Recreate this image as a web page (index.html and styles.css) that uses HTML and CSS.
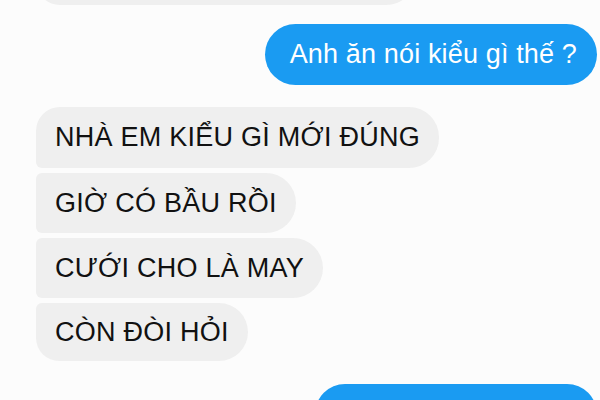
FILE: index.html
```html
<!DOCTYPE html>
<html lang="vi">
<head>
<meta charset="utf-8">
<link rel="stylesheet" href="styles.css">
</head>
<body>
<div class="chat">
  <div class="bubble in top-cut"></div>
  <div class="bubble out first-out">Anh ăn nói kiểu gì thế ?</div>
  <div class="group">
    <div class="bubble in in-first">NHÀ EM KIỂU GÌ MỚI ĐÚNG</div>
    <div class="bubble in in-mid">GIỜ CÓ BẦU RỒI</div>
    <div class="bubble in in-mid">CƯỚI CHO LÀ MAY</div>
    <div class="bubble in in-last">CÒN ĐÒI HỎI</div>
  </div>
  <div class="bubble out last-out"></div>
</div>
</body>
</html>
```
FILE: styles.css
```css
html, body {
  margin: 0;
  padding: 0;
  background: #fcfcfc;
  overflow: hidden;
}
body {
  width: 600px;
  height: 400px;
  font-family: "Liberation Sans", Arial, sans-serif;
}
.chat {
  display: flex;
  flex-direction: column;
  align-items: flex-start;
}
.group {
  display: flex;
  flex-direction: column;
  align-items: flex-start;
  gap: 5px;
  margin-top: 22px;
  margin-left: 36px;
}
.bubble {
  box-sizing: border-box;
  height: 60px;
  display: flex;
  align-items: center;
  white-space: nowrap;
}
.in {
  background: #efefef;
  color: #111111;
  font-size: 27px;
  letter-spacing: 0.25px;
  padding: 0 19px 0 19px;
  border-radius: 6px 30px 30px 6px;
}
.in-first { border-top-left-radius: 24px; height: 61px; }
.in-last { border-bottom-left-radius: 24px; height: 58px; }
.top-cut {
  width: 380px;
  height: 60px;
  margin-top: -55px;
  margin-left: 36px;
  border-bottom-left-radius: 24px;
}
.out {
  align-self: flex-end;
  margin-right: 3px;
  background: #1a9bf2;
  color: #ffffff;
  font-size: 27px;
  border-radius: 31px;
}
.first-out {
  margin-top: 19px;
  height: 61px;
  padding: 0 20px 0 25px;
  letter-spacing: 0.15px;
}
.last-out {
  margin-top: 23px;
  width: 282px;
}
```
